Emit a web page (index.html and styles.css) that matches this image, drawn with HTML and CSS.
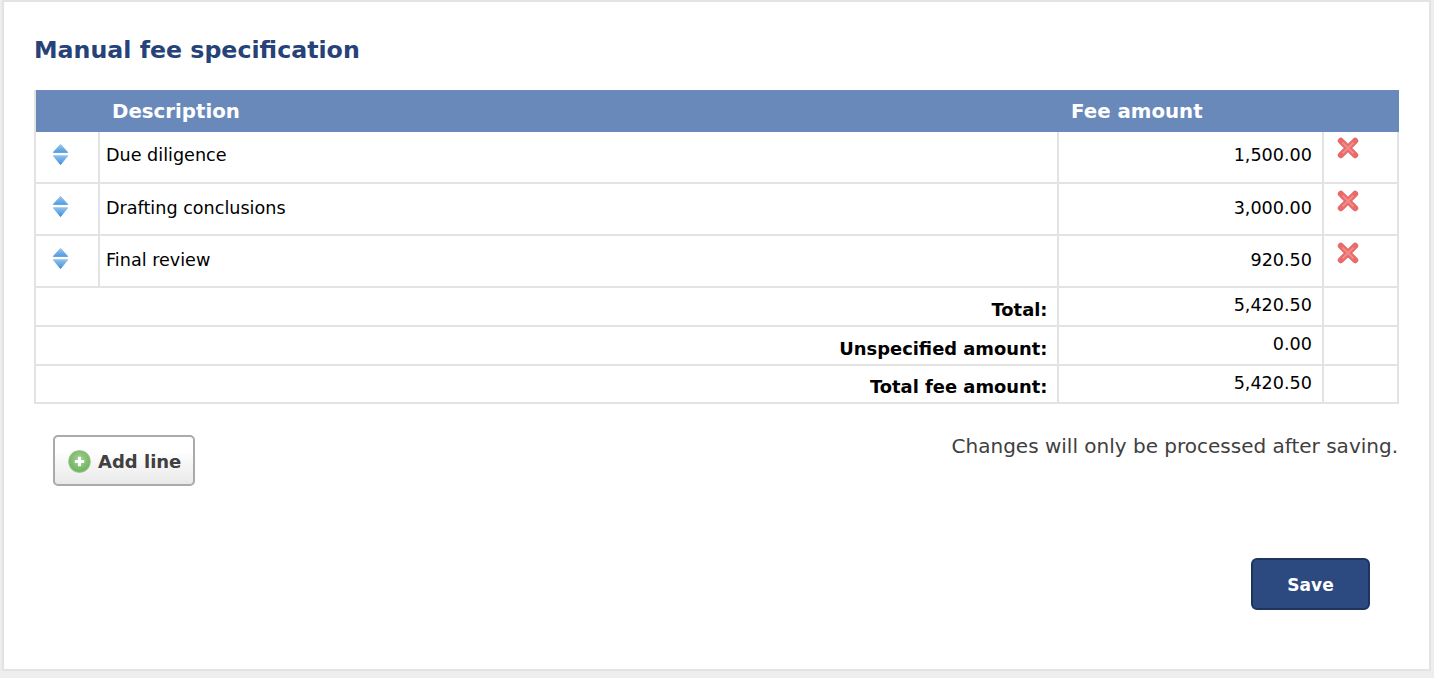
FILE: index.html
```html
<!DOCTYPE html>
<html lang="en">
<head>
<meta charset="utf-8">
<title>Manual fee specification</title>
<link rel="stylesheet" href="styles.css">
</head>
<body>
<main class="panel">
  <h1 class="title">Manual fee specification</h1>
  <table class="fees">
    <colgroup>
      <col class="col-move"><col class="col-desc"><col class="col-amount"><col class="col-del">
    </colgroup>
    <thead>
      <tr class="head-row"><th class="th-move"></th><th class="th-desc">Description</th><th class="th-amount">Fee amount</th><th class="th-del"></th></tr>
    </thead>
    <tbody>
      <tr class="line">
        <td class="move"><svg class="icon-sort" viewBox="0 0 20 26"><defs><linearGradient id="u" x1="0" y1="0" x2="0" y2="1"><stop offset="0" stop-color="#9cc8ee"/><stop offset="1" stop-color="#4f9be2"/></linearGradient><linearGradient id="d" x1="0" y1="0" x2="0" y2="1"><stop offset="0" stop-color="#8fc0ec"/><stop offset="1" stop-color="#3f8fdc"/></linearGradient></defs><path d="M10 1 L18.5 10.5 H1.5 Z" fill="url(#u)" stroke="url(#u)" stroke-linejoin="round"/><path d="M1.5 14.5 H18.5 L10 25 Z" fill="url(#d)" stroke="url(#d)" stroke-linejoin="round"/></svg></td>
        <td class="desc">Due diligence</td><td class="amount">1,500.00</td>
        <td class="del"><svg class="icon-x" viewBox="0 0 20 20"><path d="M3.5 3.5 L16.5 16.5 M16.5 3.5 L3.5 16.5" stroke="#e86a6a" stroke-width="5.6" stroke-linecap="round"/><path d="M5 5 L15 15 M15 5 L5 15" stroke="#f08a8a" stroke-width="2"/></svg></td>
      </tr>
      <tr class="line">
        <td class="move"><svg class="icon-sort" viewBox="0 0 20 26"><path d="M10 1 L18.5 10.5 H1.5 Z" fill="url(#u)" stroke="url(#u)" stroke-linejoin="round"/><path d="M1.5 14.5 H18.5 L10 25 Z" fill="url(#d)" stroke="url(#d)" stroke-linejoin="round"/></svg></td>
        <td class="desc">Drafting conclusions</td><td class="amount">3,000.00</td>
        <td class="del"><svg class="icon-x" viewBox="0 0 20 20"><path d="M3.5 3.5 L16.5 16.5 M16.5 3.5 L3.5 16.5" stroke="#e86a6a" stroke-width="5.6" stroke-linecap="round"/><path d="M5 5 L15 15 M15 5 L5 15" stroke="#f08a8a" stroke-width="2"/></svg></td>
      </tr>
      <tr class="line">
        <td class="move"><svg class="icon-sort" viewBox="0 0 20 26"><path d="M10 1 L18.5 10.5 H1.5 Z" fill="url(#u)" stroke="url(#u)" stroke-linejoin="round"/><path d="M1.5 14.5 H18.5 L10 25 Z" fill="url(#d)" stroke="url(#d)" stroke-linejoin="round"/></svg></td>
        <td class="desc">Final review</td><td class="amount">920.50</td>
        <td class="del"><svg class="icon-x" viewBox="0 0 20 20"><path d="M3.5 3.5 L16.5 16.5 M16.5 3.5 L3.5 16.5" stroke="#e86a6a" stroke-width="5.6" stroke-linecap="round"/><path d="M5 5 L15 15 M15 5 L5 15" stroke="#f08a8a" stroke-width="2"/></svg></td>
      </tr>
      <tr class="sum"><td class="sum-label" colspan="2">Total:</td><td class="amount">5,420.50</td><td></td></tr>
      <tr class="sum"><td class="sum-label" colspan="2">Unspecified amount:</td><td class="amount">0.00</td><td></td></tr>
      <tr class="sum sum-last"><td class="sum-label" colspan="2">Total fee amount:</td><td class="amount">5,420.50</td><td></td></tr>
    </tbody>
  </table>
  <div class="actions">
    <button class="btn-add" type="button"><svg class="icon-plus" viewBox="0 0 22 22"><defs><radialGradient id="g" cx="0.5" cy="0.4" r="0.6"><stop offset="0" stop-color="#a4d494"/><stop offset="1" stop-color="#6cb05c"/></radialGradient></defs><circle cx="11" cy="11" r="10.2" fill="url(#g)" stroke="#8cc07e" stroke-width="1"/><path d="M11 6.5 V15.5 M6.5 11 H15.5" stroke="#fff" stroke-width="3"/></svg>Add line</button>
    <p class="note">Changes will only be processed after saving.</p>
  </div>
  <div class="footer"><button class="btn-save" type="button">Save</button></div>
</main>
</body>
</html>
```

FILE: styles.css
```css
* { box-sizing: border-box; }
html, body { margin: 0; height: 100%; }
body {
  background: #eeeeee;
  font-family: "DejaVu Sans", Verdana, sans-serif;
  color: #000;
  overflow: hidden;
}
.panel {
  width: 1429px;
  height: 671px;
  margin-left: 2px;
  background: #fff;
  border: 2px solid #e3e3e3;
  padding: 34px 30px 0 30px;
}
.title {
  margin: 0;
  font-size: 23.7px;
  line-height: 29px;
  font-weight: 700;
  color: #264278;
}
.fees {
  margin-top: 25px;
  width: 1363px;
  table-layout: fixed;
  border-collapse: collapse;
  font-size: 17.6px;
}
.col-move { width: 64px; }
.col-desc { width: 959px; }
.col-amount { width: 265px; }
.col-del { width: 75px; }
.head-row { height: 42px; background: #6a89bb; color: #fff; }
.head-row th { font-size: 19.8px; font-weight: 700; text-align: left; padding: 0 0 0 13px; }
.head-row .th-move { border-left: 2px solid #e3e3e3; }
.head-row .th-del { border-right: 2px solid #6a89bb; }
.fees td { border: 2px solid #e3e3e3; padding: 0; }
.fees thead + tbody tr:first-child td { border-top: 0; }
.line { height: 52px; }
.line:first-child { height: 51px; }
.sum { height: 39px; }
.sum-last { height: 38px; }
.sum td { vertical-align: middle; }
.icon-sort { display: block; width: 17px; height: 23px; margin: -5px 0 0 16px; }
.desc { padding-left: 6px !important; padding-bottom: 2px !important; }
.line:first-child .desc { padding-bottom: 4px !important; }
.amount { text-align: right; padding: 0 10px 2px 0 !important; }
.line:first-child .amount { padding-bottom: 4px !important; }
.sum .amount { padding-bottom: 4px !important; }
.sum-last .amount { padding-bottom: 2px !important; }
.del { vertical-align: top; padding: 6px 0 0 0 !important; }
.line:first-child .del { padding-top: 5px !important; }
.icon-x { display: block; width: 22px; height: 22px; margin-left: 13px; }
.sum-label { text-align: right; font-weight: 700; font-size: 17.9px; padding: 6px 9.5px 0 0 !important; }
.sum-last .sum-label { padding-top: 4px !important; }
.actions {
  display: flex;
  justify-content: space-between;
  align-items: flex-start;
  margin-top: 31px;
  padding: 0 1px 0 19px;
}
.btn-add {
  display: flex;
  align-items: center;
  gap: 7px;
  width: 142px;
  height: 51px;
  padding: 2px 0 0 13px;
  border: 2px solid #aaaaaa;
  border-radius: 5px;
  background: linear-gradient(#ffffff 30%, #e9e9e9);
  font: 700 18px "DejaVu Sans", Verdana, sans-serif;
  color: #404040;
}
.icon-plus { width: 23px; height: 23px; }
.note { margin: 0; font-size: 20px; line-height: 22px; color: #404040; }
.footer { display: flex; justify-content: flex-end; margin-top: 72px; padding-right: 29px; }
.btn-save {
  width: 119px;
  height: 52px;
  padding: 2px 0 0;
  border: 2px solid #1f335f;
  border-radius: 6px;
  background: #2d4a80;
  color: #fff;
  font: 700 17px "DejaVu Sans", Verdana, sans-serif;
}
```
